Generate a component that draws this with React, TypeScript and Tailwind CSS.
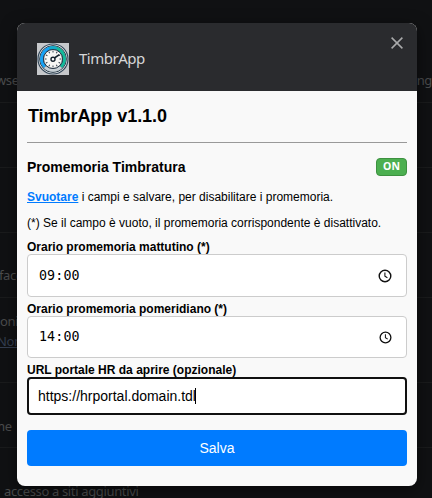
import React from "react";

function Clock({ className }: { className?: string }) {
  return (
    <svg viewBox="0 0 14 14" className={className} fill="none" stroke="#111">
      <circle cx="7" cy="7" r="5.8" strokeWidth="1.4" />
      <path d="M6.9 3.6V7.2L9.4 8.8" strokeWidth="1.1" />
    </svg>
  );
}

const ticks = [0, 30, 60, 90, 120, 150, 180, 210, 240, 270, 300, 330];

function Logo() {
  return (
    <svg viewBox="0 0 32 32" className="h-8 w-8 shrink-0">
      <rect width="32" height="32" fill="#c6c8cb" />
      <circle cx="16" cy="16" r="15" fill="#e4e9ec" stroke="#34485a" strokeWidth="1.2" />
      <circle cx="16" cy="16" r="13.4" fill="#93a5b1" stroke="#33424f" strokeWidth="1" />
      <circle cx="16" cy="16" r="12.2" fill="#24384a" />
      <path d="M8 24A11.3 11.3 0 0 1 16 4.7" fill="none" stroke="#16a2f5" strokeWidth="3" />
      <path d="M16 4.7A11.3 11.3 0 0 1 24 24" fill="none" stroke="#14b99a" strokeWidth="3" />
      <path d="M12 5.4A11.3 11.3 0 0 1 20 5.4" fill="none" stroke="#13abc9" strokeWidth="2.6" />
      <path d="M8 24A11.3 11.3 0 0 0 24 24" fill="none" stroke="#c8d0d5" strokeWidth="3" />
      <circle cx="16" cy="16" r="9.5" fill="#f6f6f4" stroke="#253444" strokeWidth="1" />
      {ticks.map((a) => (
        <path key={a} d="M16 7.7v1.8" stroke="#34424e" strokeWidth="1" transform={`rotate(${a} 16 16)`} />
      ))}
      <path d="M16 16L22.3 11.7" stroke="#15222d" strokeWidth="1.6" />
      <circle cx="16" cy="16.2" r="2" fill="#fff" stroke="#15222d" strokeWidth="1.4" />
    </svg>
  );
}

function Backdrop() {
  return (
    <div className="h-[498px] whitespace-nowrap font-['Noto_Sans',sans-serif] text-[13px] leading-5 tracking-[-0.35px] text-[#4b4c4d]">
      <div className="flex h-[103px] justify-between border-b border-[#1a1b1c] pt-[70px]">
        <span className="-ml-1">wser</span>
        <span>ing</span>
      </div>
      <div className="h-[65px] border-b border-[#1a1b1c]" />
      <div className="h-[65px] border-b border-[#1a1b1c]" />
      <div className="h-[65px] border-b border-[#1a1b1c] pt-8">
        <span className="-ml-px">face</span>
      </div>
      <div className="h-[85px] border-b border-[#1a1b1c] pt-[13px]">
        <div>oni</div>
        <div className="-ml-[3px] text-[#343e50] underline">Non</div>
      </div>
      <div className="h-[65px] border-b border-[#1a1b1c] pt-[33px]">
        <span className="-ml-[7px]">me</span>
      </div>
      <div className="pl-1 pt-[33px]">accesso a siti aggiuntivi</div>
    </div>
  );
}

function TimeField({ label, hours, minutes, box, icon }: { label: string; hours: string; minutes: string; box: string; icon: string }) {
  return (
    <div>
      <label className="block h-[14px] text-xs font-bold leading-[14px]">{label}</label>
      <div className={`flex items-center justify-between rounded border border-[#ccc] bg-white pl-[11px] pr-[14px] ${box}`}>
        <span className="font-['DejaVu_Sans_Mono',monospace] text-[13.33px] leading-4 tracking-[0.1px]">
          {hours}:{minutes}
        </span>
        <Clock className={icon} />
      </div>
    </div>
  );
}

export default function App() {
  return (
    <div className="relative h-[498px] w-[432px] overflow-hidden bg-[#101113]">
      <Backdrop />
      <div className="absolute left-[17px] top-[23px] flex h-[463px] w-[400px] flex-col overflow-hidden rounded-lg bg-[#f9f9f9] font-['Liberation_Sans',Arial,sans-serif] text-black shadow-[0_4px_16px_rgba(0,0,0,0.5)]">
        <header className="flex h-[68px] shrink-0 items-center bg-[#2a2b2e] pl-5 pr-[14px] pt-1">
          <Logo />
          <span className="mb-0.5 ml-[10px] flex-1 font-['Noto_Sans',sans-serif] text-[15px] tracking-[-0.5px] text-[#d6d6d7]">TimbrApp</span>
          <svg viewBox="0 0 12 12" className="mb-8 h-3 w-3" stroke="#a9aaab" strokeWidth="1.5">
            <path d="M.6.6l10.8 10.8M11.4.6L.6 11.4" />
          </svg>
        </header>
        <main className="flex flex-col px-[10px] pt-[15px]">
          <h1 className="pl-px text-lg font-bold leading-5 tracking-[-0.05px]">TimbrApp v1.1.0</h1>
          <hr className="mt-4 border-[#999]" />
          <div className="mt-[15px] flex h-[18px] items-center justify-between">
            <h2 className="text-sm font-bold">Promemoria Timbratura</h2>
            <span className="flex h-[18px] w-[31px] items-center justify-center rounded border border-[#3d9140] bg-[#4caf50] font-['Noto_Sans',sans-serif] text-[10.5px] font-bold text-white">ON</span>
          </div>
          <p className="mt-[14px] text-xs leading-[14px]">
            <b className="text-[#007bff] underline">Svuotare</b> i campi e salvare, per disabilitare i promemoria.
          </p>
          <p className="mb-[10px] mt-3 text-xs leading-[14px]">(*) Se il campo è vuoto, il promemoria corrispondente è disattivato.</p>
          <TimeField label="Orario promemoria mattutino (*)" hours="09" minutes="00" box="h-[43px]" icon="h-[14px] w-[14px]" />
          <div className="h-[5px]" />
          <TimeField label="Orario promemoria pomeridiano (*)" hours="14" minutes="00" box="h-[42px]" icon="h-[13px] w-[13px]" />
          <label className="mt-[5px] block h-[14px] text-xs font-bold leading-[14px]">URL portale HR da aprire (opzionale)</label>
          <div className="flex h-[38px] items-center rounded border-2 border-[#101010] bg-white pl-[9px] text-sm">
            <span>https://hrportal.domain.tdl</span>
            <span className="-ml-px h-4 w-px bg-black" />
          </div>
          <button className="mt-[15px] h-9 rounded bg-[#007bff] text-sm text-white">Salva</button>
        </main>
      </div>
    </div>
  );
}
